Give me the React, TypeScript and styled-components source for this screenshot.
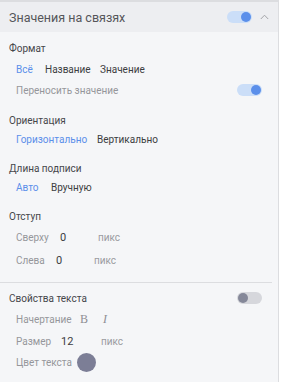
import React from "react";
import styled, { createGlobalStyle } from "styled-components";

const Global = createGlobalStyle`
  html, body { margin: 0; padding: 0; background: #ffffff; }
  body { font-family: Roboto, "Liberation Sans", sans-serif; }
  * { box-sizing: border-box; }
`;

const Panel = styled.div`
  width: 279px;
  height: 382px;
  background: #f5f6f8;
  border-top: 2px solid #dcdde0;
  border-right: 1px solid #dcdde0;
  display: flex;
  flex-direction: column;
`;

const Header = styled.div`
  height: 30px;
  background: #edeef1;
  display: flex;
  align-items: center;
  padding: 0 9px 0 9px;
  gap: 8px;
`;

const HeaderTitle = styled.div`
  flex: 1;
  font-size: 12.5px;
  color: #55565a;
`;

const Track = styled.div<{ $on: boolean }>`
  width: 25px;
  height: 12px;
  border-radius: 6px;
  background: ${(p) => (p.$on ? "#cbdef8" : "#d6d7dc")};
  display: flex;
  align-items: center;
  justify-content: ${(p) => (p.$on ? "flex-end" : "flex-start")};
  padding: 0 1px;
  flex-shrink: 0;
`;

const Knob = styled.div<{ $on: boolean }>`
  width: 10px;
  height: 10px;
  border-radius: 50%;
  background: ${(p) => (p.$on ? "#5b8fea" : "#858899")};
`;

const Toggle = ({ on }: { on: boolean }) => (
  <Track $on={on}>
    <Knob $on={on} />
  </Track>
);

const Body = styled.div`
  display: flex;
  flex-direction: column;
  padding-top: 6px;
`;

const Section = styled.div<{ $mt?: number }>`
  display: flex;
  flex-direction: column;
  margin-top: ${(p) => p.$mt ?? 0}px;
  padding-right: 16px;
`;

const Title = styled.div`
  height: 20px;
  display: flex;
  align-items: center;
  justify-content: space-between;
  padding-left: 9px;
  font-size: 10px;
  color: #46474b;
`;

const Row = styled.div<{ $mt?: number }>`
  height: 20px;
  margin-top: ${(p) => p.$mt ?? 0}px;
  display: flex;
  align-items: center;
  padding-left: 16px;
  font-size: 10px;
  white-space: nowrap;
`;

const Option = styled.span<{ $active?: boolean; $w: number }>`
  width: ${(p) => p.$w}px;
  flex-shrink: 0;
  color: ${(p) => (p.$active ? "#5b8fea" : "#3c3d41")};
`;

const Label = styled.span<{ $w?: number }>`
  color: #95969b;
  ${(p) => (p.$w ? `width: ${p.$w}px; flex-shrink: 0;` : "flex: 1;")}
`;

const Value = styled.span<{ $w: number }>`
  width: ${(p) => p.$w}px;
  flex-shrink: 0;
  font-size: 11px;
  color: #3c3d41;
`;

const Unit = styled.span`
  color: #9a9ba0;
`;

const Divider = styled.div`
  height: 1px;
  background: #dcdde0;
  margin: 12px 6px 0 0;
`;

const StyleGlyph = styled.span<{ $italic?: boolean; $w: number }>`
  width: ${(p) => p.$w}px;
  flex-shrink: 0;
  font-family: "Liberation Serif", serif;
  font-size: 12px;
  font-style: ${(p) => (p.$italic ? "italic" : "normal")};
  color: #8d8e94;
`;

const Swatch = styled.span`
  width: 19px;
  height: 19px;
  flex-shrink: 0;
  border-radius: 50%;
  background: #7c7e96;
`;

export default function App() {
  return (
    <>
      <Global />
      <Panel>
        <Header>
          <HeaderTitle>Значения на связях</HeaderTitle>
          <Toggle on />
          <svg width="9" height="6" viewBox="0 0 9 6">
            <path d="M0.8 5 L4.5 1.2 L8.2 5" fill="none" stroke="#a3a4a8" strokeWidth="1" />
          </svg>
        </Header>
        <Body>
          <Section>
            <Title>Формат</Title>
            <Row $mt={1}>
              <Option $active $w={29}>Всё</Option>
              <Option $w={55}>Название</Option>
              <Option $w={60}>Значение</Option>
            </Row>
            <Row $mt={1}>
              <Label>Переносить значение</Label>
              <Toggle on />
            </Row>
          </Section>
          <Section $mt={10}>
            <Title>Ориентация</Title>
            <Row $mt={-1}>
              <Option $active $w={81}>Горизонтально</Option>
              <Option $w={70}>Вертикально</Option>
            </Row>
          </Section>
          <Section $mt={9}>
            <Title>Длина подписи</Title>
            <Row $mt={-1}>
              <Option $active $w={35}>Авто</Option>
              <Option $w={60}>Вручную</Option>
            </Row>
          </Section>
          <Section $mt={9}>
            <Title>Отступ</Title>
            <Row $mt={1}>
              <Label $w={44}>Сверху</Label>
              <Value $w={38}>0</Value>
              <Unit>пикс</Unit>
            </Row>
            <Row $mt={3}>
              <Label $w={40}>Слева</Label>
              <Value $w={38}>0</Value>
              <Unit>пикс</Unit>
            </Row>
          </Section>
          <Divider />
          <Section $mt={5}>
            <Title>
              Свойства текста
              <Toggle on={false} />
            </Title>
            <Row $mt={1}>
              <Label $w={64}>Начертание</Label>
              <StyleGlyph $w={23}>B</StyleGlyph>
              <StyleGlyph $italic $w={10}>I</StyleGlyph>
            </Row>
            <Row $mt={2}>
              <Label $w={45}>Размер</Label>
              <Value $w={40}>12</Value>
              <Unit>пикс</Unit>
            </Row>
            <Row $mt={1}>
              <Label $w={61}>Цвет текста</Label>
              <Swatch />
            </Row>
          </Section>
        </Body>
      </Panel>
    </>
  );
}
